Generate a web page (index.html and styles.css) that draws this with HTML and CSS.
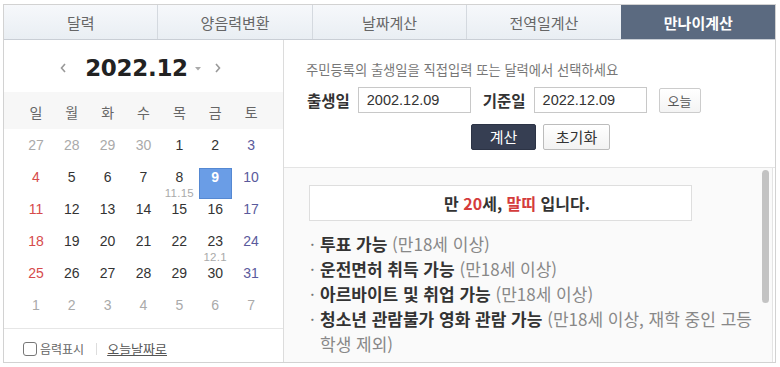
FILE: index.html
```html
<!DOCTYPE html>
<html lang="ko">
<head>
<meta charset="utf-8">
<title>만나이계산</title>
<link rel="stylesheet" href="styles.css">
</head>
<body>
<div class="wrap">
  <div class="tabs">
    <div class="tab">달력</div>
    <div class="tab">양음력변환</div>
    <div class="tab">날짜계산</div>
    <div class="tab">전역일계산</div>
    <div class="tab active">만나이계산</div>
  </div>
  <div class="main">
    <div class="cal">
      <div class="cal-head">
        <svg class="arr prev" width="8" height="12" viewBox="0 0 8 12"><path d="M6 2 L2.5 6 L6 10" fill="none" stroke="#999" stroke-width="1.6"/></svg>
        <span class="ym">2022.12</span>
        <svg class="caret" width="6" height="4" viewBox="0 0 6 4"><path d="M0 0 H6 L3 3.5 Z" fill="#aaa"/></svg>
        <svg class="arr next" width="8" height="12" viewBox="0 0 8 12"><path d="M2 2 L5.5 6 L2 10" fill="none" stroke="#999" stroke-width="1.6"/></svg>
      </div>
      <div class="week">
        <span>일</span><span>월</span><span>화</span><span>수</span><span>목</span><span>금</span><span>토</span>
      </div>
      <div class="days">
        <div class="c off"><div class="d">27</div></div>
        <div class="c off"><div class="d">28</div></div>
        <div class="c off"><div class="d">29</div></div>
        <div class="c off"><div class="d">30</div></div>
        <div class="c"><div class="d">1</div></div>
        <div class="c"><div class="d">2</div></div>
        <div class="c sat"><div class="d">3</div></div>

        <div class="c sun"><div class="d">4</div></div>
        <div class="c"><div class="d">5</div></div>
        <div class="c"><div class="d">6</div></div>
        <div class="c"><div class="d">7</div></div>
        <div class="c"><div class="d">8<span class="lunar">11.15</span></div></div>
        <div class="c sel"><div class="d">9</div></div>
        <div class="c sat"><div class="d">10</div></div>

        <div class="c sun"><div class="d">11</div></div>
        <div class="c"><div class="d">12</div></div>
        <div class="c"><div class="d">13</div></div>
        <div class="c"><div class="d">14</div></div>
        <div class="c"><div class="d">15</div></div>
        <div class="c"><div class="d">16</div></div>
        <div class="c sat"><div class="d">17</div></div>

        <div class="c sun"><div class="d">18</div></div>
        <div class="c"><div class="d">19</div></div>
        <div class="c"><div class="d">20</div></div>
        <div class="c"><div class="d">21</div></div>
        <div class="c"><div class="d">22</div></div>
        <div class="c"><div class="d">23<span class="lunar">12.1</span></div></div>
        <div class="c sat"><div class="d">24</div></div>

        <div class="c sun"><div class="d">25</div></div>
        <div class="c"><div class="d">26</div></div>
        <div class="c"><div class="d">27</div></div>
        <div class="c"><div class="d">28</div></div>
        <div class="c"><div class="d">29</div></div>
        <div class="c"><div class="d">30</div></div>
        <div class="c sat"><div class="d">31</div></div>

        <div class="c off"><div class="d">1</div></div>
        <div class="c off"><div class="d">2</div></div>
        <div class="c off"><div class="d">3</div></div>
        <div class="c off"><div class="d">4</div></div>
        <div class="c off"><div class="d">5</div></div>
        <div class="c off"><div class="d">6</div></div>
        <div class="c off"><div class="d">7</div></div>
      </div>
      <div class="cal-foot">
        <span class="chk"></span>
        <span class="lbl">음력표시</span>
        <span class="sep"></span>
        <span class="today">오늘날짜로</span>
      </div>
    </div>
    <div class="calc">
      <div class="form">
        <div class="hint">주민등록의 출생일을 직접입력 또는 달력에서 선택하세요</div>
        <div class="row">
          <span class="flabel">출생일</span>
          <span class="inp">2002.12.09</span>
          <span class="flabel second">기준일</span>
          <span class="inp">2022.12.09</span>
          <span class="btn-sm">오늘</span>
        </div>
        <div class="actions">
          <span class="btn primary">계산</span>
          <span class="btn">초기화</span>
        </div>
      </div>
      <div class="result">
        <div class="answer">만 <em>20</em>세, <em>말띠</em> 입니다.</div>
        <ul class="list">
          <li><span class="b">·</span><span class="t"><strong>투표 가능</strong> (만18세 이상)</span></li>
          <li><span class="b">·</span><span class="t"><strong>운전면허 취득 가능</strong> (만18세 이상)</span></li>
          <li><span class="b">·</span><span class="t"><strong>아르바이트 및 취업 가능</strong> (만18세 이상)</span></li>
          <li><span class="b">·</span><span class="t"><strong>청소년 관람불가 영화 관람 가능</strong> (만18세 이상, 재학 중인 고등<wbr>학생 제외)</span></li>
        </ul>
        <div class="thumb"></div>
      </div>
    </div>
  </div>
</div>
</body>
</html>
```
FILE: styles.css
```css
* { box-sizing: border-box; }
body {
  margin: 0;
  background: #fff;
  font-family: "Noto Sans CJK KR", "Noto Sans", sans-serif;
  color: #333;
}
.wrap {
  margin: 4px 0 0 3px;
  width: 773px;
  height: 359px;
  border: 1px solid #d2d2d2;
  display: flex;
  flex-direction: column;
}
.tabs {
  display: flex;
  height: 35px;
  border-bottom: 1px solid #c9ced5;
  flex: none;
}
.tab {
  flex: 1;
  display: flex;
  align-items: center;
  justify-content: center;
  background: linear-gradient(#f6f8fb, #e9eef3);
  border-left: 1px solid #d4d9df;
  color: #666;
  font-size: 15px;
}
.tab:first-child { border-left: none; }
.tab.active {
  background: #5b6a80;
  color: #fff;
  font-weight: bold;
  border-left-color: #5b6a80;
}
.main {
  flex: 1;
  display: flex;
  min-height: 0;
}
/* calendar */
.cal {
  width: 280px;
  border-right: 1px solid #dcdcdc;
  display: flex;
  flex-direction: column;
}
.cal-head {
  height: 52px;
  display: flex;
  align-items: center;
  justify-content: center;
  padding-top: 4px;
  padding-right: 6px;
}
.cal-head .prev { margin-right: 18px; }
.cal-head .next { margin-left: 13px; }
.ym {
  font-family: "DejaVu Sans", sans-serif;
  font-weight: bold;
  font-size: 23px;
  color: #222;
  letter-spacing: -0.3px;
}
.caret { margin-left: 7px; margin-top: 2px; }
.week {
  height: 37px;
  background: #f7f7f7;
  display: grid;
  grid-template-columns: repeat(7, 1fr);
  padding: 2px 14px 0;
  align-items: center;
  font-size: 14px;
  color: #666;
  text-align: center;
}
.days {
  display: grid;
  grid-template-columns: repeat(7, 1fr);
  grid-auto-rows: 32px;
  padding: 0 14px;
  margin-bottom: 7px;
  font-family: "Liberation Sans", Arial, sans-serif;
  font-size: 14px;
}
.c { padding-top: 7px; }
.d {
  width: 33px;
  height: 31px;
  margin: 0 auto;
  text-align: center;
  line-height: 18px;
  color: #333;
}
.c.off .d { color: #aaa; }
.c.sun .d { color: #d64b4b; }
.c.sat .d { color: #5a5a9c; }
.c.sel .d {
  background: #6a9de6;
  border: 1px solid #5588d2;
  color: #fff;
  font-weight: bold;
  line-height: 16px;
}
.lunar {
  display: block;
  font-size: 11.5px;
  line-height: 12px;
  color: #aaa;
  margin-top: 1px;
  letter-spacing: 0.3px;
}
.cal-foot {
  border-top: 1px solid #e6e6e6;
  flex: 1;
  display: flex;
  align-items: flex-start;
  padding: 13px 0 0 19px;
  font-size: 12px;
  color: #666;
  line-height: 14px;
}
.chk {
  width: 14px;
  height: 14px;
  border: 1px solid #777;
  border-radius: 3px;
  margin-right: 3px;
}
.sep {
  width: 1px;
  height: 12px;
  background: #ddd;
  margin: 1px 10px 0 12px;
}
.today { text-decoration: underline; color: #555; font-size: 13px; }
/* calculator */
.calc {
  flex: 1;
  display: flex;
  flex-direction: column;
  min-width: 0;
}
.form {
  height: 128px;
  border-bottom: 1px solid #e4e4e4;
  padding: 22px 0 0 22px;
  flex: none;
}
.hint {
  font-size: 13.3px;
  line-height: 16px;
  color: #777;
}
.row {
  margin-top: 9px;
  height: 26px;
  display: flex;
  align-items: center;
}
.flabel {
  font-size: 15.5px;
  font-weight: bold;
  color: #333;
  margin-left: 1px;
  margin-right: 8px;
}
.flabel.second { margin-left: 12px; }
.inp {
  width: 113px;
  height: 26px;
  border: 1px solid #c8c8c8;
  font-family: "Liberation Sans", Arial, sans-serif;
  font-size: 14.5px;
  line-height: 24px;
  padding-left: 8px;
  color: #333;
  background: #fff;
}
.btn-sm {
  margin-left: 12px;
  width: 42px;
  height: 25px;
  border: 1px solid #cccccc;
  border-radius: 2px;
  background: linear-gradient(#fff, #f4f4f4);
  font-size: 13px;
  color: #555;
  text-align: center;
  line-height: 23px;
}
.actions {
  margin-top: 11px;
  margin-left: 165px;
  display: flex;
  gap: 7px;
}
.btn {
  width: 67px;
  height: 26px;
  border: 1px solid #bcbcbc;
  border-radius: 2px;
  background: linear-gradient(#fff, #f2f2f2);
  font-size: 15px;
  color: #333;
  text-align: center;
  line-height: 24px;
}
.btn.primary {
  width: 65px;
  background: #363e52;
  border-color: #2c3345;
  color: #fff;
}
.result {
  flex: 1;
  position: relative;
  background: #fafafa;
  border-right: 1px solid #e4e4e4;
  margin-right: 2px;
  padding: 17px 0 0 25px;
  overflow: hidden;
}
.answer {
  width: 383px;
  height: 36px;
  border: 1px solid #dedede;
  background: #fff;
  text-align: center;
  padding-left: 33px;
  font-size: 16px;
  font-weight: bold;
  line-height: 34px;
  color: #333;
}
.answer em { font-style: normal; color: #d43c3c; }
.list {
  list-style: none;
  margin: 10px 0 0 0;
  padding: 0;
  width: 452px;
  font-size: 17px;
  line-height: 25px;
  color: #888;
}
.list li { display: flex; }
.list .b { width: 11px; flex: none; color: #777; padding-left: 1px; }
.list strong { color: #333; font-weight: bold; }
.thumb {
  position: absolute;
  right: 3px;
  top: 2px;
  width: 7px;
  height: 133px;
  border-radius: 4px;
  background: #c3c3c3;
}
```
